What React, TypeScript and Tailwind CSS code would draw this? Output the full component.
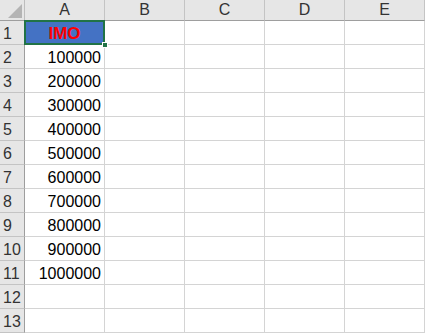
import React from 'react';

const cols = ['A', 'B', 'C', 'D', 'E'];
const values = ['IMO', '100000', '200000', '300000', '400000', '500000', '600000', '700000', '800000', '900000', '1000000', '', ''];

export default function App() {
  return (
    <div
      className="w-[427px] h-[335px] bg-white overflow-hidden"
      style={{ fontFamily: '"Liberation Sans", Arial, sans-serif' }}
    >
      <div className="grid grid-cols-[25px_80px_80px_80px_80px_80px] grid-rows-[21px_repeat(13,24px)]">
        {/* corner */}
        <div className="relative bg-[#e6e6e6] border-r border-b border-r-[#bdbdbd] border-b-[#9e9e9e]">
          <div className="absolute right-[2px] bottom-[2px] w-0 h-0 [border-bottom:14px_solid_#b4b4b4] [border-left:14px_solid_transparent]" />
        </div>
        {cols.map((c) => (
          <div
            key={c}
            className="bg-[#e6e6e6] border-r border-b border-r-[#c4c4c4] border-b-[#9e9e9e] flex items-center justify-center text-[16px] text-[#333]"
          >
            {c}
          </div>
        ))}
        {values.map((v, i) => (
          <React.Fragment key={i}>
            <div className="bg-[#e6e6e6] border-r border-b border-r-[#9e9e9e] border-b-[#c4c4c4] flex items-center pl-[3px] pt-[2px] text-[16px] text-[#333]">
              {i + 1}
            </div>
            {cols.map((c) =>
              c === 'A' && i === 0 ? (
                <div
                  key={c}
                  className="relative bg-[#4472c4] border-r border-b border-[#d4d4d4] flex items-center justify-center pt-[2px] text-[17px] font-bold text-[#ff0000]"
                >
                  {v}
                  <div className="absolute -left-[1px] -top-[1px] -right-[1px] -bottom-[1px] border-2 border-[#217346]" />
                  <div className="absolute -right-[4px] -bottom-[4px] w-[6px] h-[6px] bg-[#217346] border border-white" />
                </div>
              ) : (
                <div
                  key={c}
                  className="border-r border-b border-[#d4d4d4] flex items-center justify-end pr-[3px] pt-[3px] text-[16px] text-black"
                >
                  {c === 'A' ? v : ''}
                </div>
              )
            )}
          </React.Fragment>
        ))}
      </div>
    </div>
  );
}
